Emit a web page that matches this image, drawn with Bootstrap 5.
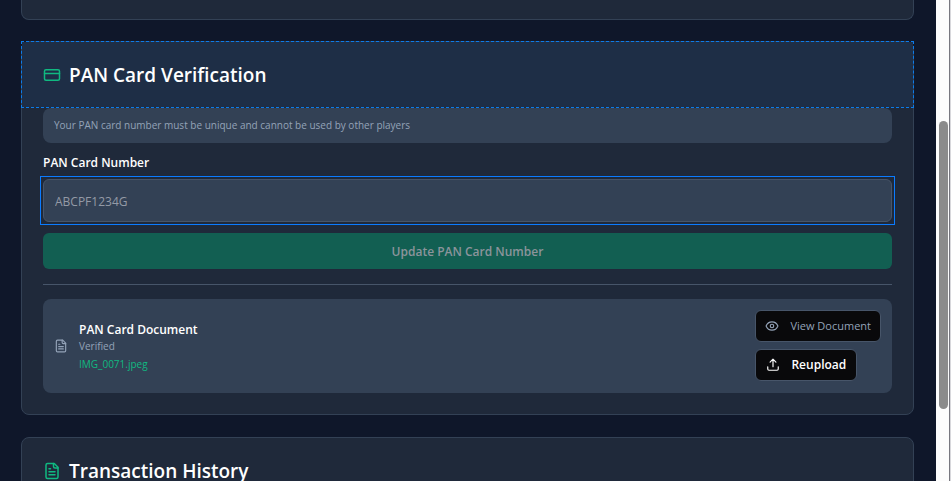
<!DOCTYPE html>
<html lang="en">
<head>
<meta charset="utf-8">
<meta name="viewport" content="width=device-width, initial-scale=1">
<title>PAN Card Verification</title>
<link href="https://cdn.jsdelivr.net/npm/bootstrap@5.3.0/dist/css/bootstrap.min.css" rel="stylesheet">
<style>
body { background: #0f172a; color: #fff; font-family: "Open Sans", "Noto Sans", sans-serif; font-size: 12px; }
.page-shell { height: 100vh; overflow: hidden; }
.page-main { padding: 0 22px 0 21px; gap: 22px; }
.panel { background: #1f293a; border: 1px solid #334155; border-radius: 8px; flex-shrink: 0; }
.panel-end { border-top: 0; border-radius: 0 0 8px 8px; height: 20px; margin-bottom: -1px; }
.panel-head { padding: 21px 21px 20px; gap: 8px; }
.panel-head h2 { font-size: 19px; line-height: 24px; font-weight: 600; margin: 0; white-space: nowrap; }
.panel-head svg { width: 18px; height: 18px; color: #10b981; }
.panel-inspected { background: #1e2e46; outline: 1px dashed #0b7bea; }
.panel-content { padding: 1px 21px 21px; }
.note { background: #334155; color: #94a3b8; border-radius: 8px; padding: 9px 11px; font-size: 10px; line-height: 17px; }
.field-label { font-size: 12px; line-height: 16px; font-weight: 600; margin: 12px 0 5px; }
.input-frame { border: 1px solid #0b7bff; padding: 2px; margin: 0 -3px; }
.pan-input, .pan-input:focus { background: #334155; color: #fff; border: 1px solid #475569; border-radius: 6px; height: 43px; padding: 1px 11px 0; font-size: 12px; box-shadow: none; }
.pan-input::placeholder { color: #949aa6; }
.update-btn, .update-btn:disabled { background: #125f52; color: #8b949b; border: 0; border-radius: 6px; height: 36px; margin-top: 8px; padding: 1px 0 0; font-size: 12px; font-weight: 600; opacity: 1; }
.divider { margin: 15px 0 14px; border-color: #475569; opacity: 1; }
.doc { background: #334155; border-radius: 8px; padding: 11px 11px 12px; }
.doc-info { gap: 11px; }
.doc-info svg { width: 14px; height: 14px; color: #94a3b8; }
.doc-text { padding-top: 2px; }
.doc-name { font-size: 12px; line-height: 16px; font-weight: 600; margin: 0; }
.doc-status { font-size: 10px; line-height: 16px; color: #94a3b8; margin: 0 0 2px; }
.doc-file { font-size: 10px; line-height: 16px; color: #10b981; text-decoration: none; }
.doc-actions { gap: 7px; }
.doc-btn, .doc-btn:hover { background: #09090b; border: 1px solid #475569; border-radius: 6px; height: 32px; padding: 0 10px; gap: 11px; font-size: 12px; line-height: 16px; color: #fff; font-weight: 600; }
.doc-btn svg { width: 14px; height: 14px; }
.doc-view, .doc-view:hover { font-size: 11px; padding: 0 9px; color: #94a3b8; font-weight: 400; }
.scroll-track { width: 15px; background: #fcfcfc; border-right: 1px solid #d8d8dc; box-shadow: inset -1px 0 #77777f; padding: 0 2px 0 3px; flex-shrink: 0; }
.scroll-before { flex: 121 0 0; }
.scroll-thumb { flex: 288 0 0; background: #8b8b8b; border-radius: 5px; }
.scroll-after { flex: 72 0 0; }
</style>
</head>
<body>
<div class="page-shell d-flex">
  <main class="page-main d-flex flex-column flex-grow-1 overflow-hidden">
    <section class="panel panel-end"></section>
    <section class="panel">
      <header class="panel-head panel-inspected d-flex align-items-center">
        <svg viewBox="0 0 24 24" fill="none" stroke="currentColor" stroke-width="2" stroke-linecap="round" stroke-linejoin="round" aria-hidden="true"><rect width="20" height="14" x="2" y="5" rx="2"/><path d="M2 10h20"/></svg>
        <h2>PAN Card Verification</h2>
      </header>
      <div class="panel-content">
        <div class="note">Your PAN card number must be unique and cannot be used by other players</div>
        <form>
          <label class="field-label d-block" for="pan">PAN Card Number</label>
          <div class="input-frame">
            <input class="form-control pan-input" id="pan" type="text" placeholder="ABCPF1234G">
          </div>
          <button class="btn update-btn w-100 d-block" type="submit" disabled>Update PAN Card Number</button>
        </form>
        <hr class="divider">
        <div class="doc d-flex align-items-center justify-content-between">
          <div class="doc-info d-flex align-items-center">
            <svg viewBox="0 0 24 24" fill="none" stroke="currentColor" stroke-width="2" stroke-linecap="round" stroke-linejoin="round" aria-hidden="true"><path d="M15 2H6a2 2 0 0 0-2 2v16a2 2 0 0 0 2 2h12a2 2 0 0 0 2-2V7Z"/><path d="M14 2v4a2 2 0 0 0 2 2h4M10 9H8M16 13H8M16 17H8"/></svg>
            <div class="doc-text">
              <h3 class="doc-name">PAN Card Document</h3>
              <p class="doc-status">Verified</p>
              <a class="doc-file d-block" href="#">IMG_0071.jpeg</a>
            </div>
          </div>
          <div class="doc-actions d-flex flex-column align-items-start">
            <button class="btn doc-btn doc-view d-flex align-items-center" type="button">
              <svg viewBox="0 0 24 24" fill="none" stroke="currentColor" stroke-width="2" stroke-linecap="round" stroke-linejoin="round" aria-hidden="true"><path d="M2.06 12.35a1 1 0 0 1 0-.7 10.75 10.75 0 0 1 19.88 0 1 1 0 0 1 0 .7 10.75 10.75 0 0 1-19.88 0"/><circle cx="12" cy="12" r="3"/></svg>
              View Document
            </button>
            <button class="btn doc-btn d-flex align-items-center" type="button">
              <svg viewBox="0 0 24 24" fill="none" stroke="currentColor" stroke-width="2" stroke-linecap="round" stroke-linejoin="round" aria-hidden="true"><path d="M21 15v4a2 2 0 0 1-2 2H5a2 2 0 0 1-2-2v-4M17 7l-5-5-5 5M12 2v13"/></svg>
              Reupload
            </button>
          </div>
        </div>
      </div>
    </section>
    <section class="panel">
      <header class="panel-head d-flex align-items-center">
        <svg viewBox="0 0 24 24" fill="none" stroke="currentColor" stroke-width="2" stroke-linecap="round" stroke-linejoin="round" aria-hidden="true"><path d="M15 2H6a2 2 0 0 0-2 2v16a2 2 0 0 0 2 2h12a2 2 0 0 0 2-2V7Z"/><path d="M14 2v4a2 2 0 0 0 2 2h4M10 9H8M16 13H8M16 17H8"/></svg>
        <h2>Transaction History</h2>
      </header>
    </section>
  </main>
  <div class="scroll-track d-flex flex-column" aria-hidden="true">
    <div class="scroll-before"></div>
    <div class="scroll-thumb"></div>
    <div class="scroll-after"></div>
  </div>
</div>
<script src="https://cdn.jsdelivr.net/npm/bootstrap@5.3.0/dist/js/bootstrap.bundle.min.js"></script>
</body>
</html>
